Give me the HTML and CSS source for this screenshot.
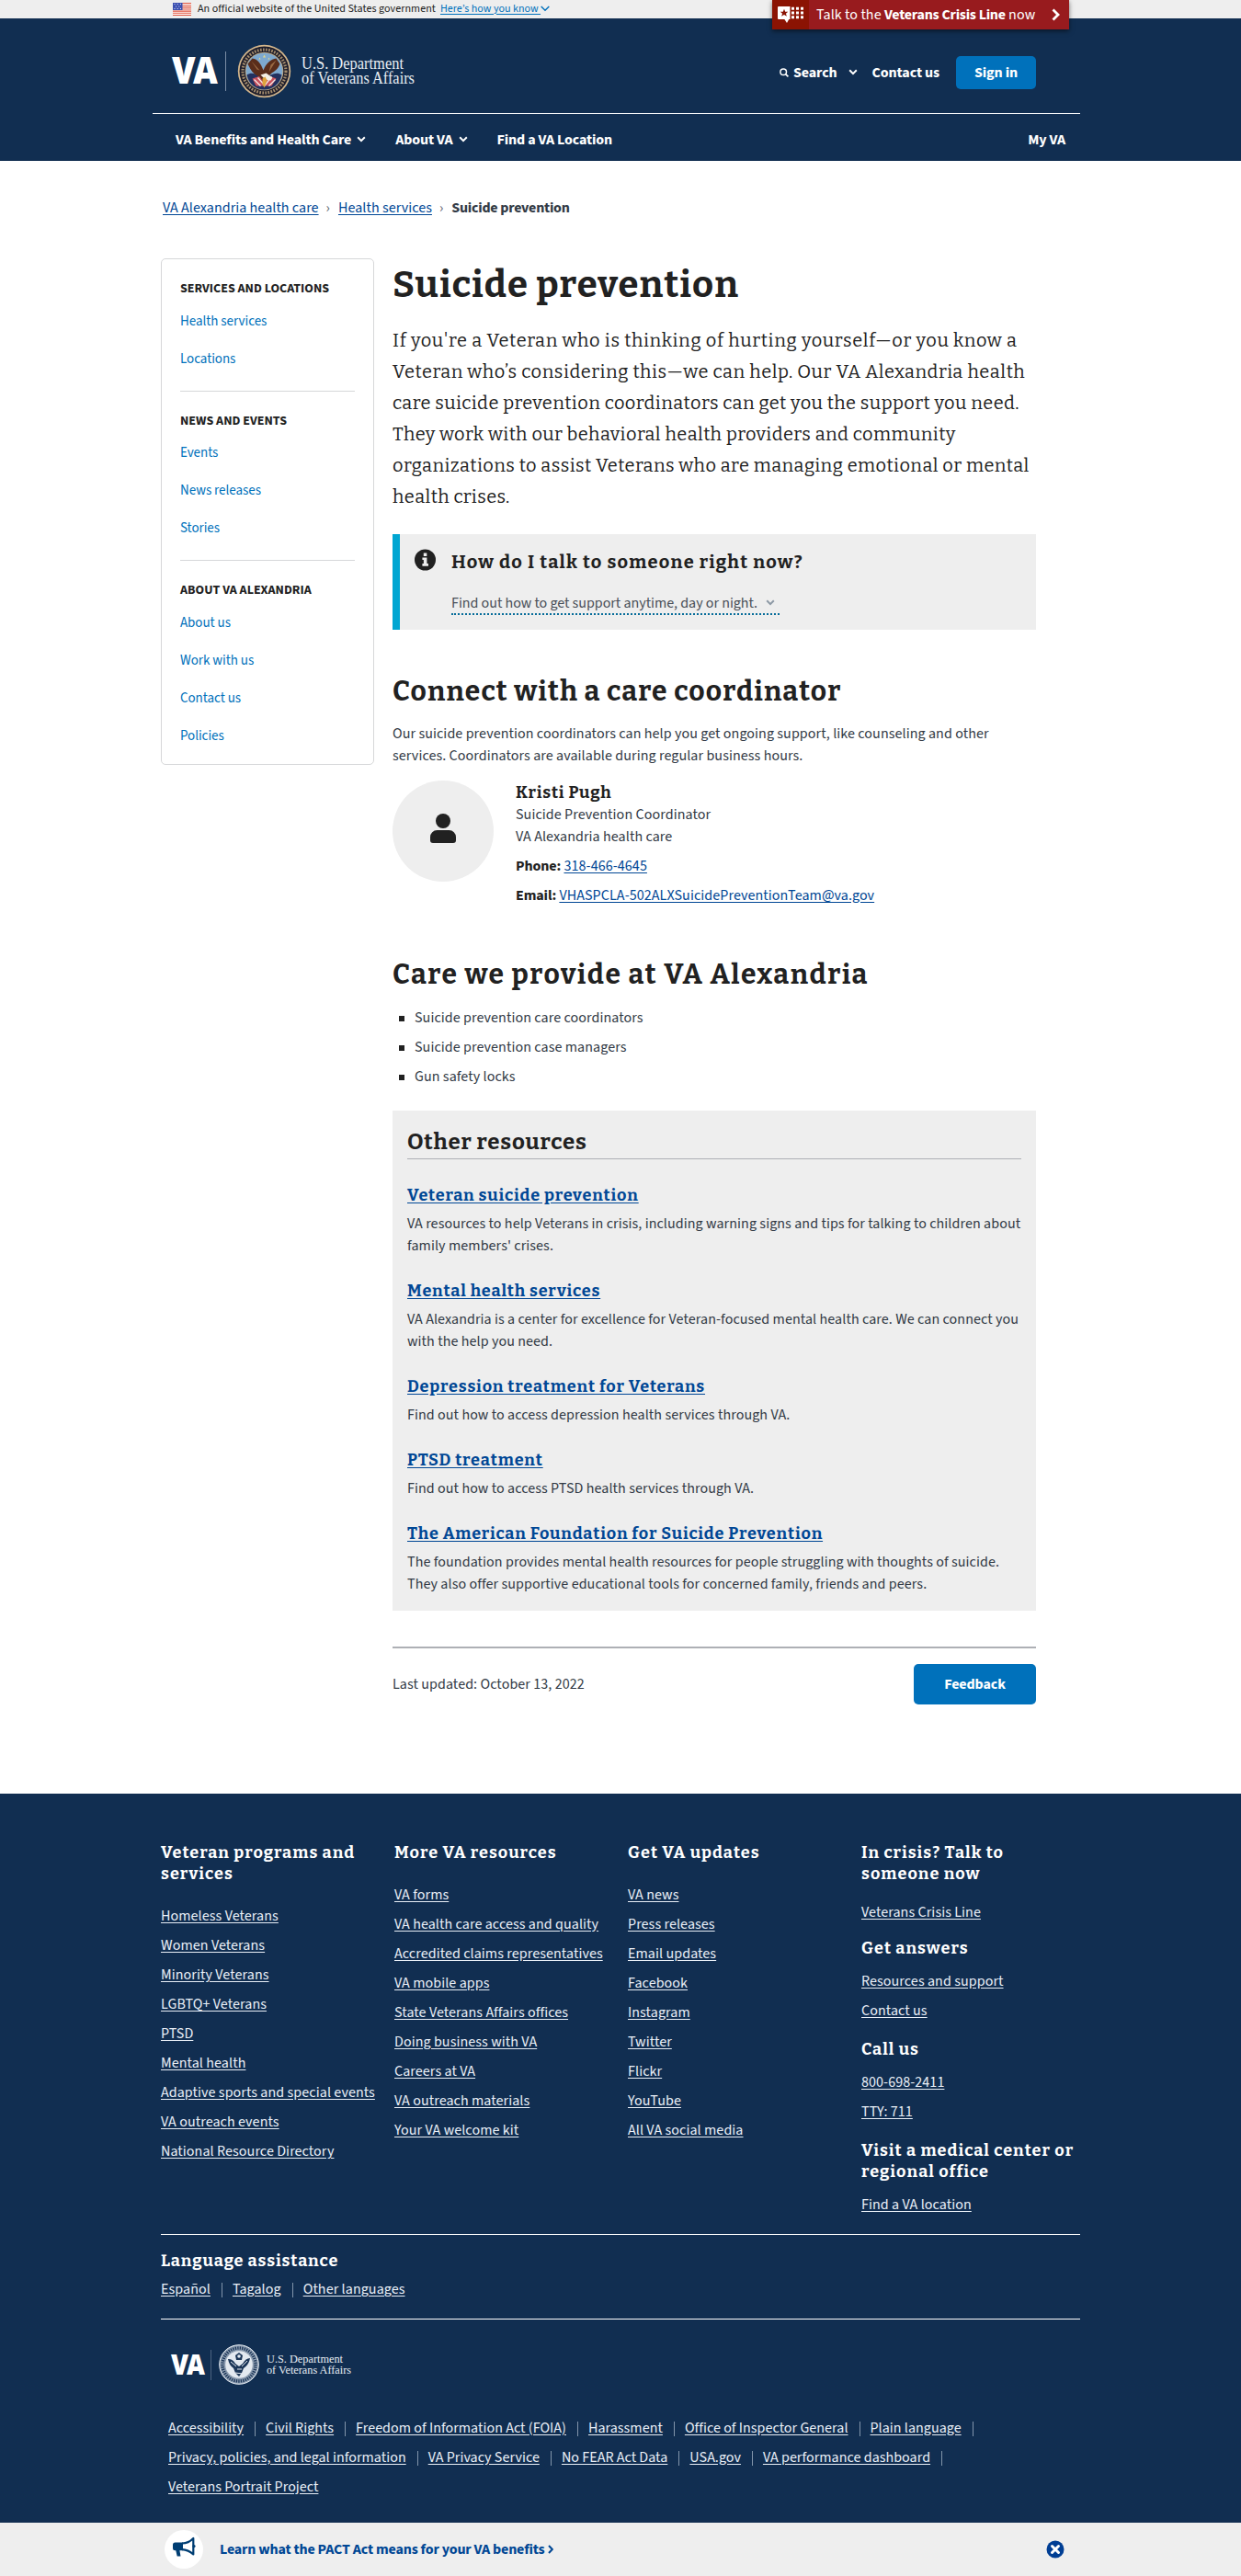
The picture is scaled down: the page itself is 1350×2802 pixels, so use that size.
FILE: index.html
```
<!DOCTYPE html>
<html lang="en">
<head>
<meta charset="utf-8">
<title>Suicide prevention | VA Alexandria health care | Veterans Affairs</title>
<link rel="stylesheet" href="styles.css">
</head>
<body>
<svg class="defs" width="0" height="0" aria-hidden="true">
  <symbol id="chev" viewBox="0 0 10 7"><path d="M1.2 1.3 5 5.1 8.8 1.3" fill="none" stroke="currentColor" stroke-width="2"/></symbol>
  <symbol id="chev-thin" viewBox="0 0 10 7"><path d="M.7 1 5 5.3 9.3 1" fill="none" stroke="currentColor" stroke-width="1.4"/></symbol>
</svg>

<div class="gov">
  <svg class="flag" viewBox="0 0 20 14"><path fill="#fff" d="M0 0h20v14H0z"/><path stroke="#e0503a" stroke-width="1.1" d="M0 .55h20M0 2.7h20M0 4.85h20M0 7h20M0 9.15h20M0 11.3h20M0 13.45h20"/><path fill="#3b4fb0" d="M0 0h10.500v8H0z"/><g fill="#dfe4fa"><circle cx="2" cy="1.6" r=".6"/><circle cx="5.200" cy="1.600" r=".6"/><circle cx="8.400" cy="1.600" r=".6"/><circle cx="3.600" cy="4" r=".6"/><circle cx="6.800" cy="4" r=".6"/><circle cx="2" cy="6.400" r=".6"/><circle cx="5.200" cy="6.400" r=".6"/><circle cx="8.400" cy="6.400" r=".6"/></g></svg>
  <span class="gov-text">An official website of the United States government</span>
  <a class="gov-link" href="#">Here’s how you know <svg class="gov-chev"><use href="#chev-thin"/></svg></a>
</div>

<a class="crisis" href="#">
  <span class="crisis-icon"><svg width="28" height="18" viewBox="0 0 28 18"><path fill="#fff" d="M1 0h12.500v14h-1.300L10 18l-2.600-4H1a1 1 0 0 1-1-1V1a1 1 0 0 1 1-1z"/><path fill="#8b1303" d="m7 2.800 1.200 3h3.100L8.900 7.700l1 3.100L7 9l-2.900 1.800 1-3.100-2.400-1.900h3.100z"/><path stroke="#fff" stroke-width="3" stroke-dasharray="3 2" d="M15 2.300h13M15 7h13M15 11.700h13"/></svg></span>
  <span class="crisis-text">Talk to the <b>Veterans Crisis Line</b> now</span>
  <svg class="crisis-arrow" viewBox="0 0 9 14"><path d="M1.500 1.500 7 7l-5.500 5.500" fill="none" stroke="#fff" stroke-width="2.800"/></svg>
</a>

<header class="header">
  <div class="header-top">
    <svg class="logo" width="268" height="62" viewBox="0 0 268 62">
      <text class="logo-va" x="0" y="43.500" textLength="47" lengthAdjust="spacingAndGlyphs">VA</text>
      <path stroke="#7c8ea5" d="M58.500 9v43"/>
      <g transform="translate(100.500 30.500)">
        <circle r="28.700" fill="#d3b68c"/><circle r="27" fill="#1d1d2b"/>
        <circle r="23.500" fill="none" stroke="#a58d6d" stroke-width="3.200" stroke-dasharray="1.700 1.400"/>
        <circle r="20.800" fill="#c9a878"/><circle r="20" fill="#7ea9cf"/>
        <path fill="#23315f" d="M-19 4C-13 0-7 4 0 8c7-4 13-8 19-4C17 14 9 20 0 20S-17 14-19 4z"/>
        <path fill="#c8505c" d="m-13 8 9-3 4 6 5-6 8 3-5 8H-9z"/><path stroke="#f3e9e6" stroke-width="1.300" d="m-11 9 7 7M-7 7l8 9M12 9l-7 7M8 6l-8 10"/>
        <path fill="#5a2d1b" d="M-18-8-13-14c6 1 9 5 12 13 3-8 8-12 14-13l4 6c-2 6-6 8-9 10L4 6 0 13-5 6C-11 4-15-1-18-8z"/>
        <path fill="#9a6a44" d="m-14-11 9 10-3-1zM13-12 5 1l2-8z"/><path fill="#f4efe4" d="m-4 4 6-2 7 5-2 3-6-1z"/><path fill="#dfa33c" d="m-2 8 3-2 2 4-3 8-2-4z"/>
        <path fill="#e3d98a" d="m0-18 1.500 3h-3zM-5-15l1 2h-2zM5-15l1 2H4z"/>
      </g>
      <text class="logo-name" x="141" y="27.500" textLength="111" lengthAdjust="spacingAndGlyphs">U.S. Department</text>
      <text class="logo-name" x="141" y="44" textLength="123" lengthAdjust="spacingAndGlyphs">of Veterans Affairs</text>
    </svg>
    <div class="tools">
      <a class="tool" href="#"><svg class="mag" viewBox="0 0 10 10"><circle cx="4.200" cy="4.200" r="3.300" fill="none" stroke="#fff" stroke-width="1.500"/><path d="m6.600 6.600 2.800 2.800" stroke="#fff" stroke-width="1.700"/></svg>Search<svg class="chev search-chev"><use href="#chev"/></svg></a>
      <a class="tool" href="#">Contact us</a>
      <button class="signin">Sign in</button>
    </div>
  </div>
  <nav class="nav">
    <a href="#">VA Benefits and Health Care<svg class="chev"><use href="#chev"/></svg></a>
    <a href="#">About VA<svg class="chev"><use href="#chev"/></svg></a>
    <a href="#">Find a VA Location</a>
    <a class="my-va" href="#">My VA</a>
  </nav>
</header>

<div class="page">
  <nav class="crumbs"><a href="#">VA Alexandria health care</a><i>›</i><a href="#">Health services</a><i>›</i><b>Suicide prevention</b></nav>
  <div class="cols">
    <aside class="side">
      <section><h2>Services and locations</h2><a href="#">Health services</a><a href="#">Locations</a></section>
      <section><h2>News and events</h2><a href="#">Events</a><a href="#">News releases</a><a href="#">Stories</a></section>
      <section><h2>About VA Alexandria</h2><a href="#">About us</a><a href="#">Work with us</a><a href="#">Contact us</a><a href="#">Policies</a></section>
    </aside>
    <main class="main">
      <h1>Suicide prevention</h1>
      <p class="intro"><span class="airy">If you're a Veteran who is thinking of hurting yourself—or you know a</span><br><span class="open">Veteran who’s considering this—we can help. Our VA Alexandria health</span><br>care suicide prevention coordinators can get you the support you need.<br>They work with our behavioral health providers and community<br>organizations to assist Veterans who are managing emotional or mental<br>health crises.</p>
      <div class="alert">
        <svg class="info" viewBox="0 0 24 24"><circle cx="12" cy="12" r="12" fill="#212121"/><path fill="#eee" d="M10.200 4.300h3.700v3.500h-3.700zM8.800 9.300h5.200v7h1.600v2.800H8.800v-2.800h1.500v-4.200H8.800z"/></svg>
        <div>
          <h2>How do I talk to someone right now?</h2>
          <a class="expand" href="#">Find out how to get support anytime, day or night.<svg class="expand-chev"><use href="#chev"/></svg></a>
        </div>
      </div>
      <h2 class="h2">Connect with a care coordinator</h2>
      <p class="copy">Our suicide prevention coordinators can help you get ongoing support, like counseling and other<br>services. Coordinators are available during regular business hours.</p>
      <div class="person">
        <div class="avatar"><svg width="28" height="32" viewBox="0 0 28 32"><ellipse cx="14" cy="8" rx="8" ry="8" fill="#212121"/><path fill="#212121" d="M7.500 18h13a7.500 7.500 0 0 1 7.500 7.500V29a3 3 0 0 1-3 3H3a3 3 0 0 1-3-3v-3.500A7.500 7.500 0 0 1 7.500 18z"/></svg></div>
        <div class="person-info">
          <h3>Kristi Pugh</h3>
          <p>Suicide Prevention Coordinator<br>VA Alexandria health care</p>
          <p><b>Phone:</b> <a href="#">318-466-4645</a></p>
          <p><b>Email:</b> <a href="#">VHASPCLA-502ALXSuicidePreventionTeam@va.gov</a></p>
        </div>
      </div>
      <h2 class="h2 care">Care we provide at VA Alexandria</h2>
      <ul class="bullets"><li>Suicide prevention care coordinators</li><li>Suicide prevention case managers</li><li>Gun safety locks</li></ul>
      <section class="other">
        <h2>Other resources</h2>
        <h3><a href="#">Veteran suicide prevention</a></h3>
        <p>VA resources to help Veterans in crisis, including warning signs and tips for talking to children about<br>family members' crises.</p>
        <h3><a href="#">Mental health services</a></h3>
        <p>VA Alexandria is a center for excellence for Veteran-focused mental health care. We can connect you<br>with the help you need.</p>
        <h3><a href="#">Depression treatment for Veterans</a></h3>
        <p>Find out how to access depression health services through VA.</p>
        <h3><a href="#">PTSD treatment</a></h3>
        <p>Find out how to access PTSD health services through VA.</p>
        <h3><a href="#">The American Foundation for Suicide Prevention</a></h3>
        <p>The foundation provides mental health resources for people struggling with thoughts of suicide.<br>They also offer supportive educational tools for concerned family, friends and peers.</p>
      </section>
      <div class="updated"><span>Last updated: October 13, 2022</span><button class="feedback">Feedback</button></div>
    </main>
  </div>
</div>

<footer class="footer">
  <div class="foot">
    <div class="foot-cols">
      <section><h2>Veteran programs and<br>services</h2>
        <ul><li><a href="#">Homeless Veterans</a></li><li><a href="#">Women Veterans</a></li><li><a href="#">Minority Veterans</a></li><li><a href="#">LGBTQ+ Veterans</a></li><li><a href="#">PTSD</a></li><li><a href="#">Mental health</a></li><li><a href="#">Adaptive sports and special events</a></li><li><a href="#">VA outreach events</a></li><li><a href="#">National Resource Directory</a></li></ul></section>
      <section><h2>More VA resources</h2>
        <ul><li><a href="#">VA forms</a></li><li><a href="#">VA health care access and quality</a></li><li><a href="#">Accredited claims representatives</a></li><li><a href="#">VA mobile apps</a></li><li><a href="#">State Veterans Affairs offices</a></li><li><a href="#">Doing business with VA</a></li><li><a href="#">Careers at VA</a></li><li><a href="#">VA outreach materials</a></li><li><a href="#">Your VA welcome kit</a></li></ul></section>
      <section><h2>Get VA updates</h2>
        <ul><li><a href="#">VA news</a></li><li><a href="#">Press releases</a></li><li><a href="#">Email updates</a></li><li><a href="#">Facebook</a></li><li><a href="#">Instagram</a></li><li><a href="#">Twitter</a></li><li><a href="#">Flickr</a></li><li><a href="#">YouTube</a></li><li><a href="#">All VA social media</a></li></ul></section>
      <section class="contact">
        <h2>In crisis? Talk to<br>someone now</h2><ul class="crisis-list"><li><a href="#">Veterans Crisis Line</a></li></ul>
        <h2>Get answers</h2><ul><li><a href="#">Resources and support</a></li><li><a href="#">Contact us</a></li></ul>
        <h2>Call us</h2><ul><li><a href="#">800-698-2411</a></li><li><a href="#">TTY: 711</a></li></ul>
        <h2>Visit a medical center or<br>regional office</h2><ul><li><a href="#">Find a VA location</a></li></ul>
      </section>
    </div>
    <section class="lang"><h2>Language assistance</h2>
      <ul class="bar-list"><li><a href="#">Español</a></li><li><a href="#">Tagalog</a></li><li><a href="#">Other languages</a></li></ul></section>
    <svg class="foot-logo" width="200" height="46" viewBox="0 0 200 46">
      <text class="logo-va small" x="0" y="34" textLength="35" lengthAdjust="spacingAndGlyphs">VA</text>
      <path stroke="#4d6380" d="M43.500 7v33"/>
      <g transform="translate(74 23)">
        <circle r="21.300" fill="#8c9cb0" stroke="#e8edf3" stroke-width="1"/><circle r="18" fill="none" stroke="#1b3557" stroke-width="3.400" stroke-dasharray="1.300 1.200"/>
        <circle r="14.800" fill="#e3e9f0"/>
        <path fill="#1b3557" d="M-12-6c3 0 6 1 8 5l4 3 4-3c2-4 5-6 8-6-1 6-4 9-7 11l-2 5-3 4-4-4-2-5c-3-2-5-5-6-10z"/><path stroke="#e3e9f0" d="m-9-3 6 5M9-4 3 2M-4 9l8 1M-2 5h5"/><path fill="#1b3557" d="m0-13 4 3-1 5h-6l-1-5z"/><circle cy="-9" r="1.800" fill="#e3e9f0"/>
      </g>
      <text class="logo-name small" x="104" y="20.500" textLength="83" lengthAdjust="spacingAndGlyphs">U.S. Department</text>
      <text class="logo-name small" x="104" y="33" textLength="92" lengthAdjust="spacingAndGlyphs">of Veterans Affairs</text>
    </svg>
    <ul class="bar-list legal"><li><a href="#">Accessibility</a></li><li><a href="#">Civil Rights</a></li><li><a href="#">Freedom of Information Act (FOIA)</a></li><li><a href="#">Harassment</a></li><li><a href="#">Office of Inspector General</a></li><li><a href="#">Plain language</a></li><li><a href="#">Privacy, policies, and legal information</a></li><li><a href="#">VA Privacy Service</a></li><li><a href="#">No FEAR Act Data</a></li><li><a href="#">USA.gov</a></li><li><a href="#">VA performance dashboard</a></li><li><a href="#">Veterans Portrait Project</a></li></ul>
  </div>
</footer>

<div class="promo">
  <span class="promo-icon"><svg width="26" height="24" viewBox="0 0 26 24"><path fill="#003e73" d="M3.500 7.500H12v8.700H3.500a2.500 2.500 0 0 1-2.500-2.500V10a2.500 2.500 0 0 1 2.500-2.500zM4 15h4.200l1.300 7.500H5.700z"/><path fill="none" stroke="#003e73" stroke-width="2.200" stroke-linejoin="round" d="M11 8.500c5 0 9-2 12.300-5.500v17.500C20 17.500 16 15.500 11 15.200"/><circle cx="24" cy="11.600" r="1.600" fill="#003e73"/></svg></span>
  <a class="promo-link" href="#">Learn what the PACT Act means for your VA benefits<svg class="promo-arrow" viewBox="0 0 6 10"><path d="m1 1 3.800 4L1 9" fill="none" stroke="#004795" stroke-width="2"/></svg></a>
  <svg class="close" viewBox="0 0 20 20"><circle cx="10" cy="10" r="9.500" fill="#003e94"/><path d="m6.500 6.500 7 7m0-7-7 7" stroke="#fff" stroke-width="3" stroke-linecap="round"/></svg>
</div>
</body>
</html>
```
FILE: styles.css
```
* { box-sizing: border-box; }
body { margin: 0; background: #fff; color: #323a45; font: 16px/24px "Source Sans 3", "Source Sans Pro", "Noto Sans CJK SC", sans-serif; letter-spacing: .08px; }
h1, h2, h3, p, ul { margin: 0; padding: 0; }
ul { list-style: none; }
h1, h2, h3 { color: #212121; font-family: Bitter, "DejaVu Serif Condensed", serif; font-weight: 700; }
a { color: #004795; text-underline-offset: 2px; }
b { font-weight: 700; }
button { font: inherit; font-weight: 700; color: #fff; background: #0071bb; border: 0; border-radius: 5px; letter-spacing: -.1px; }
.defs { display: block; }

.gov { height: 20px; background: #eee; display: flex; align-items: center; padding-left: 188px; font-size: 12px; line-height: 20px; color: #212121; }
.flag { width: 20px; height: 14px; margin-right: 7px; }
.gov-link { color: #0071bb; margin-left: 5px; letter-spacing: .02px; }
.gov-chev { width: 10px; height: 7px; }

.crisis { position: absolute; top: 0; left: 840px; width: 323px; height: 32px; display: flex; align-items: center; background: #981b1e; color: #fff; text-decoration: none; box-shadow: 0 2px 5px rgba(0, 0, 0, .5); }
.crisis-icon { width: 40px; height: 32px; background: #8b1303; display: flex; align-items: center; justify-content: center; }
.crisis-text { margin-left: 8px; line-height: 33px; }
.crisis-text b { letter-spacing: -.24px; }
.crisis-arrow { width: 9px; height: 14px; margin: 0 10px 0 auto; }

.header { background: #112e51; height: 155px; color: #fff; }
.header-top { width: 1009px; height: 104px; margin-left: 166px; border-bottom: 1px solid #fff; display: flex; align-items: center; padding: 13px 48px 0 21px; }
.logo, .foot-logo { overflow: visible; }
.logo-va { font-family: "Open Sans", "Source Sans 3", sans-serif; font-weight: 800; font-size: 40.500px; fill: #fff; letter-spacing: -3px; }
.logo-va.small { font-size: 30px; letter-spacing: -2.200px; }
.logo-name { font-family: "Liberation Serif", serif; font-size: 18px; fill: #e6ecf2; letter-spacing: 0; }
.logo-name.small { font-size: 13.5px; }
.tools { margin-left: auto; display: flex; align-items: center; padding-top: 1px; }
.tool { color: #fff; font-weight: 700; text-decoration: none; letter-spacing: -.1px; margin-right: 16px; }
.tool + .tool { margin-right: 18px; }
.mag { width: 10px; height: 10px; margin-right: 5px; }
.chev { width: 10px; height: 7px; margin-left: 6px; vertical-align: 2px; }
.search-chev { margin-left: 12px; }
.signin { width: 87px; height: 36px; }
.nav { width: 968px; margin-left: 191px; padding-top: 5px; display: flex; gap: 32px; line-height: 46px; }
.nav a { color: #fff; font-weight: 700; text-decoration: none; letter-spacing: -.14px; }
.nav .my-va { margin-left: auto; }

.page { width: 1000px; margin-left: 175px; padding-top: 39px; height: 1776px; }
.crumbs { padding-left: 2px; letter-spacing: .05px; }
.crumbs b { letter-spacing: -.25px; }
.crumbs i { font-style: normal; color: #5b616b; margin: 0 9px 0 8px; }
.cols { display: flex; gap: 20px; margin-top: 43px; align-items: flex-start; }
.side { width: 232px; height: 551px; border: 1px solid #d6d7d9; border-radius: 5px; padding: 22px 20px 0; font-size: 15px; letter-spacing: -.04px; }
.side h2 { font: 700 14px/20px "Source Sans 3", "Source Sans Pro", "Noto Sans CJK SC", sans-serif; text-transform: uppercase; letter-spacing: .03px; margin-bottom: 13.5px; }
.side section + section { border-top: 1px solid #d6d7d9; margin-top: 22px; padding-top: 22px; }
.side a { display: block; color: #0071bb; text-decoration: none; line-height: 24px; margin-top: 17px; }
.side h2 + a { margin-top: 0; }

.main { width: 700px; }
h1 { font-size: 40px; line-height: 52px; margin-top: 3px; letter-spacing: 1.06px; }
.intro { font: 20px/34px Bitter, "DejaVu Serif Condensed", serif; color: #212121; margin-top: 17px; letter-spacing: .41px; white-space: nowrap; }
.airy { letter-spacing: .63px; }
.open { letter-spacing: .54px; }
.alert { margin-top: 24px; height: 104px; background: #eee; border-left: 8px solid #00a6d2; padding: 17px 0 0 16px; display: flex; gap: 17px; }
.info { width: 23px; height: 24px; margin-top: -1px; }
.alert h2 { font-size: 20px; line-height: 26px; letter-spacing: 1.23px; }
.expand { display: inline-block; color: #494f57; text-decoration: none; line-height: 21px; letter-spacing: -.02px; margin-top: 22px; border-bottom: 2px dotted #046b99; padding-right: 5px; }
.expand-chev { width: 10px; height: 7px; margin-left: 9px; color: #8d99a5; vertical-align: 2px; }
.h2 { font-size: 30px; line-height: 39px; margin-top: 48px; letter-spacing: 1.15px; }
.copy { margin-top: 14px; white-space: nowrap; }
.person { display: flex; gap: 24px; margin-top: 15px; }
.avatar { width: 110px; height: 110px; border-radius: 50%; background: #eee; display: flex; align-items: center; justify-content: center; padding-bottom: 6px; }
.person-info { padding-top: 2px; }
.person-info h3 { font-size: 18px; line-height: 23px; letter-spacing: .8px; }
.person-info p + p { margin-top: 8px; }
.person-info b { color: #212121; letter-spacing: -.1px; }
.h2.care { margin-top: 55px; letter-spacing: 1.55px; }
.bullets { margin-top: 15px; }
.bullets li { display: flex; align-items: center; margin-bottom: 8px; }
.bullets li::before { content: ""; width: 6px; height: 6px; background: #212121; margin: 2px 11px 0 7px; }
.other { margin-top: 25px; background: #eee; padding: 19px 16px 16px; white-space: nowrap; }
.other h2 { font-size: 24px; line-height: 30px; padding-bottom: 3px; border-bottom: 1px solid #aeb0b5; margin-bottom: 27px; letter-spacing: .8px; }
.other h3 { font-size: 18px; line-height: 24px; margin: 24px 0 8px; letter-spacing: .82px; }
.other h2 + h3 + p, .other p { margin-top: -1px; padding-bottom: 1px; }
.updated { margin-top: 39px; border-top: 2px solid #aeb0b5; padding-top: 17px; display: flex; justify-content: space-between; align-items: center; }
.feedback { width: 133px; height: 44px; }

.footer { background: #112e51; height: 793px; }
.foot { width: 1000px; margin-left: 175px; padding-top: 53px; }
.foot a { color: #e9eff7; }
.foot h2 { color: #fff; font-size: 18px; line-height: 23.4px; letter-spacing: 1.03px; white-space: nowrap; }
.foot-cols { display: grid; grid-template-columns: repeat(4, 254px); height: 427px; width: 1000px; border-bottom: 1px solid #fff; }
.foot-cols ul { margin-top: 21.6px; white-space: nowrap; }
.foot-cols li { margin-bottom: 8px; }
.foot-cols .contact ul { margin: 11.6px 0 19px; }
.foot-cols .contact li:last-child { margin-bottom: 0; }
.foot-cols .contact .crisis-list { margin: 17px 0 16px; }
.lang { padding-top: 17px; height: 92px; border-bottom: 1px solid #fff; }
.foot .lang h2 { letter-spacing: .88px; }
.bar-list { display: flex; flex-wrap: wrap; row-gap: 8px; }
.lang .bar-list { margin-top: 7px; }
.bar-list li { display: flex; align-items: center; }
.bar-list li:not(:last-child)::after { content: ""; width: 1px; height: 16px; background: #8295ab; margin: 2px 11px 0 12px; }
.foot-logo { display: block; margin: 26px 0 34px 11px; }
.legal { padding-left: 8px; letter-spacing: .04px; }

.promo { height: 58px; background: #eee; display: flex; align-items: center; padding: 0 192px 0 179px; }
.promo-icon { width: 42px; height: 42px; border-radius: 50%; background: #fff; display: flex; align-items: center; justify-content: center; padding-bottom: 6px; }
.promo-link { margin-left: 18px; font-weight: 700; text-decoration: none; letter-spacing: -.17px; }
.promo-arrow { width: 6px; height: 10px; margin-left: 4px; }
.close { width: 20px; height: 20px; margin-left: auto; }
```
